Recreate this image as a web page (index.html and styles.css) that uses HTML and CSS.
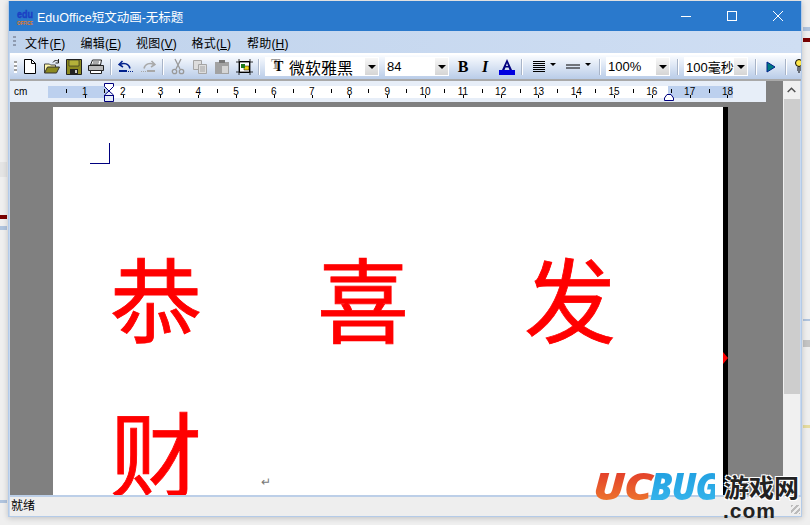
FILE: index.html
```html
<!DOCTYPE html>
<html lang="zh-CN">
<head>
  <meta charset="UTF-8" />
  <title>EduOffice短文动画-无标题</title>
  <link rel="stylesheet" href="styles.css">
</head>
<body>

<!-- bits of the windows behind -->
<span class="bg-mark mark-a"></span>
<span class="bg-mark mark-b"></span>
<span class="bg-mark mark-c"></span>
<span class="bg-mark mark-d"></span>
<span class="bg-mark mark-e"></span>
<span class="bg-mark mark-f"></span>
<span class="bg-mark mark-g"></span>
<span class="bg-mark mark-h"></span>
<span class="bg-mark mark-i"></span>

<div class="window">

  <div class="titlebar">
    <svg class="app-logo" width="18" height="20" viewBox="0 0 18 20">
      <text x="9" y="12" text-anchor="middle" textLength="16" lengthAdjust="spacingAndGlyphs" font-family="Liberation Sans" font-weight="bold" font-size="11" fill="#1c3fc4" stroke="#1c3fc4" stroke-width=".4">edu</text>
      <text x="9" y="19" text-anchor="middle" textLength="16" lengthAdjust="spacingAndGlyphs" font-family="Liberation Sans" font-weight="bold" font-size="5" fill="#e8791a">OFFICE</text>
    </svg>
    <span class="app-title">EduOffice短文动画-无标题</span>
    <div class="win-btns">
      <span class="win-btn"><svg width="12" height="12" viewBox="0 0 12 12"><path d="M1 6.500h10" stroke="#fff"/></svg></span>
      <span class="win-btn"><svg width="12" height="12" viewBox="0 0 12 12"><rect x="1.500" y="1.500" width="9" height="9" fill="none" stroke="#fff"/></svg></span>
      <span class="win-btn"><svg width="12" height="12" viewBox="0 0 12 12"><path d="M1 1l10 10M11 1L1 11" stroke="#fff"/></svg></span>
    </div>
  </div>

  <div class="menubar">
    <span class="grip"></span>
    <span class="menu-item">文件(<u>F</u>)</span>
    <span class="menu-item">编辑(<u>E</u>)</span>
    <span class="menu-item">视图(<u>V</u>)</span>
    <span class="menu-item">格式(<u>L</u>)</span>
    <span class="menu-item">帮助(<u>H</u>)</span>
  </div>

  <div class="toolbar">
    <span class="grip"></span>
    <span class="tool"><svg width="16" height="17" viewBox="0 0 16 17"><path d="M2.500 1.500h7l4 4v10h-11z" fill="#fff" stroke="#000"/><path d="M9.500 1.500v4h4" fill="none" stroke="#000"/></svg></span>
    <span class="tool"><svg width="17" height="16" viewBox="0 0 17 16"><path d="M.5 14V5h5l1 1h5v2" fill="#fff7a8" stroke="#444"/><path d="M.5 14l3-6h12l-3 6z" fill="#8c8a20" stroke="#333"/><path d="M9 3.500c1-2 3-2.500 5-1.500" fill="none" stroke="#222"/><path d="M14.500 0v4h-3" fill="none" stroke="#222"/></svg></span>
    <span class="tool"><svg width="16" height="16" viewBox="0 0 16 16"><path d="M.5.5h15v15H.5z" fill="#8c8a20" stroke="#222"/><path d="M3 1h10v6H3z" fill="#b3b13a" stroke="#222" stroke-width=".6"/><path d="M4 10h8v5H4z" fill="#222"/><path d="M9 11h2v3H9z" fill="#ccc"/></svg></span>
    <span class="tool"><svg width="18" height="16" viewBox="0 0 18 16"><path d="M5.500 1h9l-1 5h-10z" fill="#fff" stroke="#222"/><path d="M1.500 6.500h15v5h-15z" fill="#bbb" stroke="#222"/><path d="M3.500 11.500h11v3h-11z" fill="#fff" stroke="#222"/><path d="M6 3h6M5.500 5h6" stroke="#555"/></svg></span>
    <span class="sep"></span>
    <span class="tool"><svg width="16" height="16" viewBox="0 0 16 16"><path d="M4.500 2L1 5.500 5 8" fill="none" stroke="#00218c" stroke-width="1.500"/><path d="M2 5.500c4-2 9-1 10 4" fill="none" stroke="#00218c" stroke-width="1.500"/><path d="M1 11h8v2H1zM10 12h1v1h-1zM12 12h1v1h-1zM14 12h1v1h-1z" fill="#00218c"/></svg></span>
    <span class="tool"><svg width="16" height="16" viewBox="0 0 16 16"><path d="M11.500 2L15 5.500 11 8" fill="none" stroke="#a8a8a8" stroke-width="1.500"/><path d="M14 5.500c-4-2-9-1-10 4" fill="none" stroke="#a8a8a8" stroke-width="1.500"/><path d="M7 11h8v2H7zM1 12h1v1H1zM3 12h1v1H3zM5 12h1v1H5z" fill="#a8a8a8"/></svg></span>
    <span class="sep"></span>
    <span class="tool"><svg width="16" height="17" viewBox="0 0 16 17"><path d="M5 1l5 10M11 1L6 11" stroke="#999" stroke-width="1.300" fill="none"/><circle cx="4.500" cy="13.500" r="2.200" fill="none" stroke="#999" stroke-width="1.300"/><circle cx="11.500" cy="13.500" r="2.200" fill="none" stroke="#999" stroke-width="1.300"/></svg></span>
    <span class="tool"><svg width="16" height="16" viewBox="0 0 16 16"><path d="M1.500 1.500h8v9h-8z" fill="#ddd" stroke="#a5a5a5"/><path d="M6.500 5.500h8v9h-8z" fill="#ddd" stroke="#a5a5a5"/><path d="M8 8h5M8 10h5M8 12h5" stroke="#a5a5a5"/></svg></span>
    <span class="tool"><svg width="16" height="16" viewBox="0 0 16 16"><path d="M1 3h14v12H1z" fill="#a2a2a2"/><path d="M5 1h6v3H5z" fill="#777"/><path d="M8 7h6v7H8z" fill="#d5d5d5"/></svg></span>
    <span class="tool"><svg width="17" height="16" viewBox="0 0 17 16"><path d="M3.500 2.500h10v11h-10z" fill="#fff" stroke="#000"/><path d="M0 3h17M0 13h17M3 0v16M14 0v16" stroke="#000" stroke-width=".8"/><path d="M8 7h5v4H8z" fill="#ecd31a" stroke="#000" stroke-width=".5"/><path d="M5 5h4v4H5z" fill="#1d7a1d"/></svg></span>
    <span class="sep"></span>
    <div class="combo combo-font">
      <span class="font-icon">T</span>
      <span class="combo-text">微软雅黑</span>
      <span class="combo-arrow"></span>
    </div>
    <div class="combo combo-size"><span class="combo-text">84</span><span class="combo-arrow"></span></div>
    <span class="tool tool-fmt fmt-b">B</span>
    <span class="tool tool-fmt fmt-i">I</span>
    <span class="tool"><svg width="16" height="16" viewBox="0 0 16 16"><path d="M8 0l5 11h-2.500l-1-2.500h-3L5.500 11H3z" fill="#00007f"/><path d="M7 7h2L8 4z" fill="#e4ecf7"/><path d="M0 11h16v5H0z" fill="#0000e0"/></svg></span>
    <span class="sep"></span>
    <span class="tool tool-drop tool-align"><svg width="14" height="12" viewBox="0 0 14 12"><path d="M1 .5h12M1 2.500h12M1 4.500h12M1 6.500h12M1 8.500h12M1 10.500h12" stroke="#000"/></svg><span class="mini-arrow"></span></span>
    <span class="tool tool-drop tool-line"><svg width="14" height="6" viewBox="0 0 14 6"><path d="M0 1h14M0 4h14" stroke="#000"/></svg><span class="mini-arrow"></span></span>
    <span class="sep"></span>
    <div class="combo combo-zoom"><span class="combo-text">100%</span><span class="combo-arrow"></span></div>
    <span class="sep"></span>
    <div class="combo combo-zoom"><span class="combo-text">100毫秒</span><span class="combo-arrow"></span></div>
    <span class="sep"></span>
    <span class="tool"><svg width="10" height="12" viewBox="0 0 10 12"><path d="M1 1l8 5-8 5z" fill="#007a80" stroke="#00218c"/></svg></span>
    <span class="sep"></span>
    <span class="tool tool-bulb"><svg width="14" height="16" viewBox="0 0 14 16"><circle cx="6" cy="4" r="3.500" fill="#ffe84a" stroke="#000"/><path d="M4 9h4M4 11h4M5 13h2" stroke="#000"/></svg></span>
  </div>

  <div class="workspace">
    <div class="editor">
      <div class="ruler-row">
        <div class="ruler">
          <span class="ruler-unit">cm</span>
          <div class="ruler-band">
            <span class="cell">1</span><span class="cell">2</span><span class="cell">3</span>
            <span class="cell">4</span><span class="cell">5</span><span class="cell">6</span>
            <span class="cell">7</span><span class="cell">8</span><span class="cell">9</span>
            <span class="cell">10</span><span class="cell">11</span><span class="cell">12</span>
            <span class="cell">13</span><span class="cell">14</span><span class="cell">15</span>
            <span class="cell">16</span><span class="cell">17</span><span class="cell">18</span>
          </div>
          <svg class="marker marker-left" width="10" height="19" viewBox="0 0 10 19"><path d="M.5.5h9v3L5 8 .5 3.500z" fill="#fff" stroke="#00007f"/><path d="M5 8l4.500 4v6.500h-9V12z" fill="#e7eef8" stroke="#00007f"/><path d="M.5 12.500h9" stroke="#00007f"/></svg>
          <svg class="marker marker-right" width="10" height="8" viewBox="0 0 10 8"><path d="M.5 7.500V5L3 1.500h4L9.500 5v2.500z" fill="#fff" stroke="#00007f"/></svg>
        </div>
        <div class="ruler-corner"></div>
      </div>
      <div class="doc-area">
        <div class="page">
          <span class="caret-corner"></span>
          <div class="text-line"><span>恭</span><span>喜</span><span>发</span></div>
          <div class="text-line"><span>财</span></div>
          <span class="return-mark">↵</span>
        </div>
        <div class="page-shadow"><span class="shadow-arrow"></span></div>
      </div>
    </div>
    <div class="scrollbar">
      <span class="scroll-up"><svg width="9" height="6" viewBox="0 0 9 6"><path d="M.7 5l3.800-3.800L8.300 5" fill="none" stroke="#505050" stroke-width="1.500"/></svg></span>
      <span class="scroll-thumb"></span>
    </div>
  </div>

  <div class="statusbar">
    <span>就绪</span>
    <span class="size-grip"></span>
  </div>
</div>

<!-- watermark -->
<div class="watermark">
  <div class="wm-top"><span class="wm-uc">UC</span><span class="wm-bug">BUG</span><span class="wm-cn">游戏网</span></div>
  <div class="wm-com">.com</div>
</div>

</body>
</html>
```

FILE: styles.css
```css
* { box-sizing: border-box; }
html, body {
  margin: 0;
  height: 525px;
  overflow: hidden;
}
body {
  background: #efefef;
  padding: 1px 8px 8px 8px;
  font-family: "Liberation Sans", "Noto Sans CJK SC", sans-serif;
  font-size: 12px;
  color: #000;
}
.bg-mark { position: absolute; display: block; }
.mark-a { left: 0; top: 215px; width: 7px; height: 4px; background: #7a0000; }
.mark-b { left: 0; top: 226px; width: 7px; height: 4px; background: #b0c4de; }
.mark-c { left: 803px; top: 38px; width: 7px; height: 4px; background: #7a0000; }
.mark-d { left: 803px; top: 27px; width: 7px; height: 4px; background: #b0c4de; }
.mark-e { left: 0; top: 162px; width: 7px; height: 15px; background: #e4e4e4; }
.mark-f { left: 803px; top: 319px; width: 7px; height: 2px; background: #b0c4de; }
.mark-g { left: 803px; top: 340px; width: 7px; height: 7px; background: #c4c4c4; }
.mark-h { left: 803px; top: 425px; width: 7px; height: 3px; background: #e6dca0; }
.mark-i { left: 0; top: 500px; width: 7px; height: 3px; background: #b0c4de; }

.window {
  position: relative;
  width: 794px;
  height: 516px;
  display: flex;
  flex-direction: column;
  background: #c8d9f0;
  border: 1px solid #b4cbe8;
  border-top: 0;
  box-shadow: 0 1px 6px rgba(0,0,0,.2);
}

/* title */
.titlebar {
  height: 30px;
  background: #2a79cc;
  color: #fff;
  display: flex;
  align-items: center;
  padding-left: 7px;
  flex: none;
}
.app-logo { margin-right: 3px; }
.app-title { font-size: 12.5px; }
.win-btns { margin-left: auto; display: flex; }
.win-btn {
  width: 46px;
  height: 30px;
  display: flex;
  align-items: center;
  justify-content: center;
}

/* menu */
.menubar {
  height: 22px;
  flex: none;
  display: flex;
  align-items: center;
  background: linear-gradient(90deg, #c0d3ec, #cfdef3);
  padding-left: 4px;
}
.grip {
  width: 3px;
  height: 12px;
  flex: none;
  margin-right: 9px;
  background: repeating-linear-gradient(180deg, #8f9bb0 0 2px, transparent 2px 4px);
}
.menu-item {
  font-size: 12px;
  width: 55.500px;
  flex: none;
  letter-spacing: .2px;
  white-space: nowrap;
}

/* toolbar */
.toolbar {
  height: 28px;
  flex: none;
  display: flex;
  align-items: center;
  margin-left: 1px;
  padding: 1px 0 2px 4px;
  border-top: 2px solid #fff;
  border-bottom: 2px solid #a9a9a9;
  background: linear-gradient(180deg, #fafcff, #b9cce8);
  overflow: hidden;
}
.toolbar .grip {
  background-image: repeating-linear-gradient(180deg, #a0a0a0 0 2px, #fff 2px 4px);
  margin-right: 2px;
}
.tool {
  width: 22px;
  height: 22px;
  flex: none;
  display: flex;
  align-items: center;
  justify-content: center;
}
.tool-fmt {
  font-family: "Liberation Serif", serif;
  font-size: 16px;
  font-weight: bold;
}
.fmt-i { font-style: italic; }
.tool-drop { justify-content: flex-start; }
.tool-align { width: 33px; padding-left: 6px; gap: 4px; }
.tool-line { width: 37px; padding-left: 7px; gap: 5px; }
.tool-bulb { justify-content: flex-start; padding-left: 3px; }
.mini-arrow {
  width: 0;
  height: 0;
  border: 3px solid transparent;
  border-top: 3px solid #000;
  border-bottom: 0;
  margin-bottom: 4px;
}
.sep {
  width: 2px;
  height: 16px;
  flex: none;
  margin: 0 3px;
  background: #a8b4c8;
  border-right: 1px solid #fff;
}
.combo {
  height: 19px;
  display: flex;
  align-items: center;
  background: #fff;
  flex: none;
  padding: 1px 1px 1px 2px;
}
.combo-text { flex: 1; white-space: nowrap; }
.combo-font { width: 114px; font-size: 16px; padding-left: 5px; margin: 0 6px 0 2px; }
.combo-size { width: 64px; font-size: 13px; margin-right: 3px; }
.combo-zoom { width: 64px; font-size: 13px; margin: 0 4px 0 2px; }
.font-icon {
  width: 19px;
  flex: none;
  padding-left: 4px;
  font-family: "Liberation Serif", serif;
  font-size: 14px;
  font-weight: bold;
  text-shadow: -3px -2px 0 #999;
}
.combo-arrow {
  width: 13px;
  height: 17px;
  flex: none;
  background: linear-gradient(180deg, #f7f7f7, #d5d5d5);
  position: relative;
}
.combo-arrow::after {
  content: "";
  position: absolute;
  left: 3px;
  top: 7px;
  border: 4px solid transparent;
  border-top: 4px solid #000;
  border-bottom: 0;
}

/* editor */
.workspace {
  flex: 1;
  min-height: 0;
  display: flex;
  padding-left: 1px;
}
.editor {
  flex: 1;
  min-width: 0;
  display: flex;
  flex-direction: column;
}
.ruler-row { height: 21px; flex: none; display: flex; }
.ruler {
  flex: 1;
  position: relative;
  background: #e7eef8;
  padding: 5px 0 4px 38px;
  display: flex;
}
.ruler-unit {
  position: absolute;
  left: 4px;
  top: 5px;
  font-size: 10px;
}
.ruler-band {
  width: 685px;
  display: flex;
  padding-left: 18px;
  font-size: 10px;
  background: linear-gradient(90deg, #bcd0ee 60px, #fff 60px 620px, #bcd0ee 620px);
}
.cell {
  width: 37.8px;
  flex: none;
  text-align: center;
  line-height: 12px;
  position: relative;
}
.cell::before {
  content: "";
  position: absolute;
  left: 0;
  top: 3px;
  width: 1px;
  height: 4px;
  background: #000;
}
.cell::after {
  content: "";
  position: absolute;
  left: 50%;
  bottom: 0;
  width: 1px;
  height: 3px;
  background: #000;
}
.marker { position: absolute; }
.marker-left { left: 94px; top: 2px; }
.marker-right { left: 654px; top: 12px; }
.ruler-corner { width: 17px; background: #808080; }

.doc-area {
  flex: 1;
  min-height: 0;
  background: #808080;
  padding: 5px 0 0 43px;
  display: flex;
  overflow: hidden;
}
.page {
  width: 670px;
  background: #fff;
  position: relative;
  padding-top: 134px;
  flex: none;
}
.caret-corner {
  position: absolute;
  left: 37px;
  top: 36px;
  width: 20px;
  height: 21px;
  border-right: 1px solid #00007f;
  border-bottom: 1px solid #00007f;
}
.text-line {
  display: flex;
  gap: 115px;
  height: 154px;
  padding-left: 57px;
  color: #f00;
  font-family: "Noto Sans CJK SC", sans-serif;
  font-size: 92px;
  font-weight: 400;
  -webkit-text-stroke: .8px #f00;
  line-height: 110px;
}
.return-mark {
  position: absolute;
  left: 208px;
  top: 368px;
  color: #777;
  font-size: 12px;
}
.page-shadow {
  width: 5px;
  flex: none;
  background: #000;
  position: relative;
}
.shadow-arrow {
  position: absolute;
  left: 0;
  top: 245px;
  border: 6px solid transparent;
  border-left: 5px solid #f00;
  border-right: 0;
}

/* scrollbar */
.scrollbar {
  width: 17px;
  flex: none;
  background: #f0f0f0;
  display: flex;
  flex-direction: column;
  margin-right: 1px;
}
.scroll-up {
  height: 18px;
  display: flex;
  align-items: center;
  justify-content: center;
}
.scroll-thumb { height: 295px; margin-left: 1px; background: #cdcdcd; }

/* status */
.statusbar {
  height: 21px;
  flex: none;
  background: #eee;
  border-top: 2px solid #bccfe8;
  margin-left: 1px;
  padding-left: 1px;
  font-size: 12px;
  line-height: 19px;
  display: flex;
  justify-content: space-between;
}
.size-grip {
  width: 9px;
  height: 9px;
  margin: 8px 1px 0 0;
  background: repeating-linear-gradient(135deg, #bbb 0 2px, transparent 2px 4px);
}

/* watermark */
.watermark {
  position: absolute;
  left: 593px;
  top: 468px;
  width: 215px;
}
.wm-top { display: flex; align-items: center; height: 36px; line-height: 36px; }
.wm-uc, .wm-bug {
  display: block;
  flex: none;
  transform-origin: left center;
  font-family: "Open Sans", sans-serif;
  font-weight: 800;
  font-size: 37px;
  letter-spacing: -1px;
  font-style: italic;
  white-space: nowrap;
  -webkit-background-clip: text;
  background-clip: text;
  color: transparent;
}
.wm-uc {
  width: 57px;
  transform: scaleX(1.24);
  background-image: linear-gradient(180deg, #e2382a, #ee7a2e);
}
.wm-bug {
  width: 68px;
  transform: scaleX(.96);
  background-image: linear-gradient(180deg, #1f9ee0, #38b6ec);
}
.wm-cn {
  font-family: "Noto Sans CJK SC", sans-serif;
  font-size: 25px;
  font-weight: 700;
  color: #222;
  margin-left: 6px;
  line-height: 24px;
  white-space: nowrap;
  text-shadow: 1px 1px 0 #fff, -1px -1px 0 #fff, 1px -1px 0 #fff, -1px 1px 0 #fff;
}
.wm-com {
  font-family: "Liberation Sans", sans-serif;
  font-weight: bold;
  font-size: 21px;
  letter-spacing: 1px;
  line-height: 13px;
  padding-left: 130px;
  color: #222;
}
```
